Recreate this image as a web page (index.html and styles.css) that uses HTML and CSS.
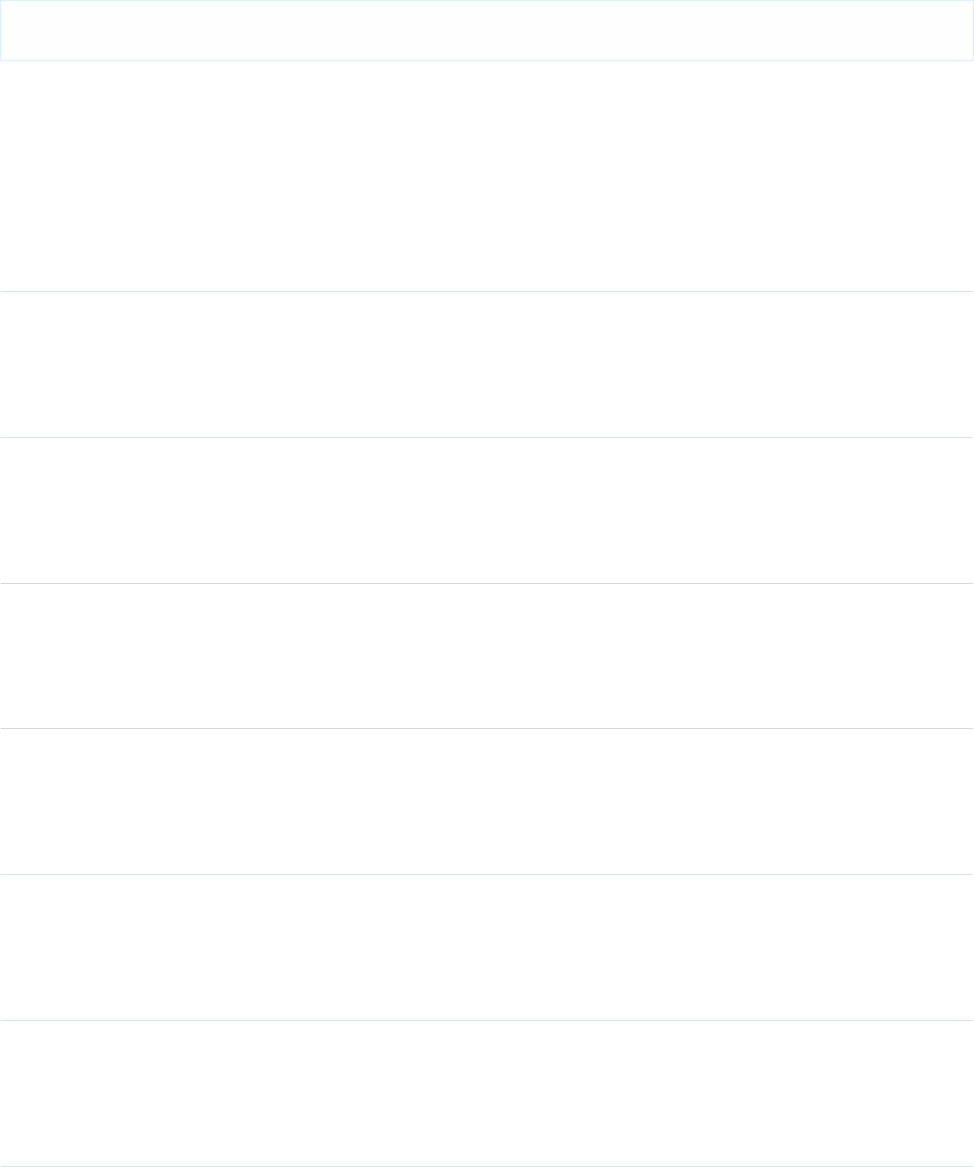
FILE: index.html
```html
<!DOCTYPE html>
<html lang="en">
  <head>
    <meta charset="UTF-8" />
    <meta name="viewport" content="width=device-width, initial-scale=1.0" />
    <title>Loading</title>
    <link rel="stylesheet" href="styles.css">
  </head>
  <body>
    <div class="topbar"></div>
    <div class="list">
      <div class="row row-first"></div>
      <div class="row"></div>
      <div class="row row-grey"></div>
      <div class="row row-grey"></div>
      <div class="row"></div>
      <div class="row"></div>
      <div class="row"></div>
    </div>
  </body>
</html>
```

FILE: styles.css
```css
body {
  margin: 0;
  font-family: "Liberation Sans", Arial, sans-serif;
  background: #ffffff;
}
.topbar {
  height: 59px;
  border: 1px solid #dcf0f9;
  background: #fefefe;
}
.list {
  margin: 0 1px;
}
.row {
  height: 144.83px;
  border-bottom: 1px solid #dbe3e8;
}
.row-first {
  height: 230px;
}
.row-grey {
  border-bottom-color: #d3d8db;
}
```
